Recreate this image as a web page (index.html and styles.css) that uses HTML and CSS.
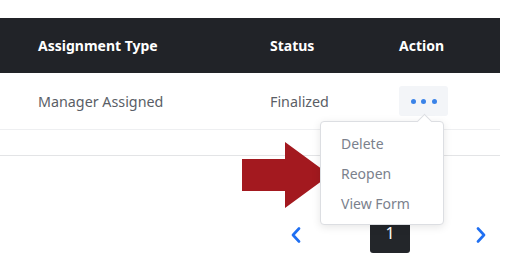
FILE: index.html
```html
<!DOCTYPE html>
<html>
<head>
<meta charset="utf-8">
<link rel="stylesheet" href="styles.css">
</head>
<body>
<div class="page">
  <div class="table">
    <div class="row head">
      <div class="cell c1">Assignment Type</div>
      <div class="cell c2">Status</div>
      <div class="cell c3">Action</div>
    </div>
    <div class="row body">
      <div class="cell c1">Manager Assigned</div>
      <div class="cell c2">Finalized</div>
      <div class="cell c3">
        <div class="action-wrap">
          <button class="dots-btn"><span class="dot"></span><span class="dot"></span><span class="dot"></span></button>
          <div class="menu">
            <span class="caret"></span>
            <div class="item">Delete</div>
            <div class="item">Reopen</div>
            <div class="item">View Form</div>
          </div>
        </div>
      </div>
    </div>
    <div class="spacer"></div>
  </div>
  <div class="pager">
    <svg class="chev prev" width="10" height="16" viewBox="0 0 10 16"><polyline points="8,1.5 2,8 8,14.5" fill="none" stroke="#1f6ff2" stroke-width="2.6" stroke-linecap="round" stroke-linejoin="round"/></svg>
    <div class="pagebox">1</div>
    <svg class="chev next" width="10" height="16" viewBox="0 0 10 16"><polyline points="2,1.5 8,8 2,14.5" fill="none" stroke="#1f6ff2" stroke-width="2.6" stroke-linecap="round" stroke-linejoin="round"/></svg>
  </div>
  <svg class="red-arrow" width="88" height="66" viewBox="0 0 88 66"><path d="M0 17 H43 V0 L88 33 L43 66 V49 H0 Z" fill="#a3191f"/></svg>
</div>
</body>
</html>
```
FILE: styles.css
```css
* { box-sizing: border-box; }
html, body { margin: 0; padding: 0; background: #fff; }
body { font-family: "Noto Sans", "Open Sans", sans-serif; font-size: 14px; }
.page { position: relative; width: 520px; height: 262px; padding-top: 18px; }
.table { width: 500px; }
.row { display: grid; grid-template-columns: 270px 129px 101px; align-items: center; }
.cell.c1 { padding-left: 38px; }
.head { height: 55px; background: #212328; color: #fff; font-weight: 700; }
.body { height: 57px; border-bottom: 1px solid #eeeff1; color: #5a5e66; font-size: 14.3px; }
.spacer { height: 26px; border-bottom: 1px solid #e3e4e6; }
.action-wrap { position: relative; width: 49px; height: 30px; }
.dots-btn { width: 49px; height: 30px; border: 0; border-radius: 3px; background: #f3f5f8; display: flex; align-items: center; justify-content: center; gap: 5.5px; padding: 0; }
.dot { width: 5px; height: 5px; border-radius: 50%; background: #3a83e8; }
.menu { position: absolute; left: -79px; top: 35px; width: 124px; height: 104px; background: #fff; border: 1px solid #dcdee2; border-radius: 4px; box-shadow: 0 2px 8px rgba(0,0,0,0.10); padding-top: 7px; z-index: 5; }
.caret { position: absolute; top: -6px; left: 98px; width: 11px; height: 11px; background: #fff; border-left: 1px solid #dcdee2; border-top: 1px solid #dcdee2; transform: rotate(45deg); }
.item { height: 30px; line-height: 30px; padding-left: 20px; color: #7b818d; font-size: 14px; position: relative; }
.pager { display: flex; align-items: center; height: 36px; margin-top: 61px; }
.chev.prev { margin-left: 291px; }
.pagebox { margin-left: 69px; width: 40px; height: 35px; background: #23262a; color: #fff; border-radius: 3px; display: flex; align-items: center; justify-content: center; font-size: 16px; padding-bottom: 4px; }
.chev.next { margin-left: 66px; }
.red-arrow { position: absolute; left: 242px; top: 142px; }
```
